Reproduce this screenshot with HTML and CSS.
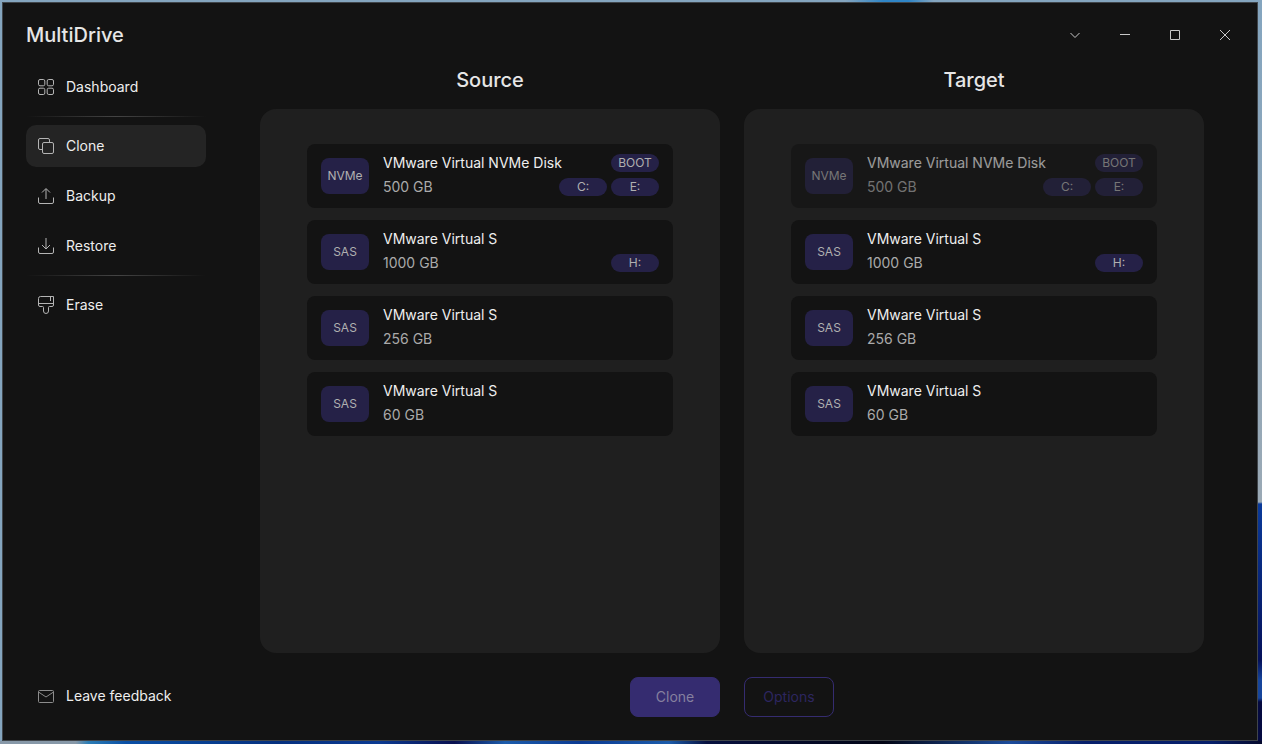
FILE: index.html
```html
<!DOCTYPE html>
<html lang="en">
<head>
    <meta charset="UTF-8">
    <meta name="viewport" content="width=device-width, initial-scale=1.0">
    <title>MultiDrive</title>
    <link rel="stylesheet" href="styles.css">
</head>
<body>
    <div class="window">
        <header class="titlebar">
            <h1>MultiDrive</h1>
            <div class="window-controls">
                <button type="button" aria-label="Menu"><svg viewBox="0 0 12 12"><path d="M1.500 4 6 8.500 10.500 4"/></svg></button>
                <button type="button" aria-label="Minimize"><svg viewBox="0 0 12 12"><path d="M1 5.500H11"/></svg></button>
                <button type="button" aria-label="Maximize"><svg viewBox="0 0 12 12"><path d="M1.500 1.500H10.500V10.500H1.500Z"/></svg></button>
                <button type="button" aria-label="Close"><svg viewBox="0 0 12 12"><path d="M1 1 11 11M11 1 1 11"/></svg></button>
            </div>
        </header>

        <div class="layout">
            <nav class="sidebar">
                <a href="#" class="nav-item">
                    <svg viewBox="0 0 18 18"><rect x="1.500" y="1.500" width="6.300" height="6.300" rx="1.500"/><rect x="10.200" y="1.500" width="6.300" height="6.300" rx="1.500"/><rect x="1.500" y="10.200" width="6.300" height="6.300" rx="1.500"/><rect x="10.200" y="10.200" width="6.300" height="6.300" rx="1.500"/></svg>
                    Dashboard
                </a>
                <hr>
                <a href="#" class="nav-item active">
                    <svg viewBox="0 0 18 18"><rect x="5.500" y="5.500" width="11" height="11" rx="1.500"/><path d="M5.500 12.500H3a1.500 1.500 0 0 1-1.500-1.500V3A1.500 1.500 0 0 1 3 1.500h8A1.500 1.500 0 0 1 12.500 3v2.500"/></svg>
                    Clone
                </a>
                <a href="#" class="nav-item">
                    <svg viewBox="0 0 18 18"><path d="M1.500 10.500V15A1.500 1.500 0 0 0 3 16.500h12a1.500 1.500 0 0 0 1.500-1.500v-4.500M9 12V2M5 5.500l4-4 4 4"/></svg>
                    Backup
                </a>
                <a href="#" class="nav-item">
                    <svg viewBox="0 0 18 18"><path d="M1.500 10.500V15A1.500 1.500 0 0 0 3 16.500h12a1.500 1.500 0 0 0 1.500-1.500v-4.500M9 1v10.500M5 8l4 4 4-4"/></svg>
                    Restore
                </a>
                <hr>
                <a href="#" class="nav-item">
                    <svg viewBox="0 0 18 18"><path d="M3.500.5h13v8.500a1.500 1.500 0 0 1-1.500 1.500h-2.500q-1 0-1 1v3.500a2.500 2.500 0 0 1-5 0v-3.500q0-1-1-1H3a1.500 1.500 0 0 1-1.500-1.500V2.500a2 2 0 0 1 2-2ZM1.500 7.500h15M13.500.5v4.500"/></svg>
                    Erase
                </a>
                <a href="#" class="nav-item feedback">
                    <svg viewBox="0 0 18 18"><rect x="1.500" y="3.500" width="15" height="12" rx="1"/><path d="M1.500 5 9 10l7.500-5"/></svg>
                    Leave feedback
                </a>
            </nav>

            <main class="content">
                <section class="column">
                    <h2>Source</h2>
                    <div class="panel">
                        <button type="button" class="disk">
                            <span class="disk-type">NVMe</span>
                            <span class="disk-info">
                                <span class="disk-line"><span class="disk-name">VMware Virtual NVMe Disk</span><span class="tag">BOOT</span></span>
                                <span class="disk-line"><span class="disk-size">500 GB</span><span class="tag">C:</span><span class="tag">E:</span></span>
                            </span>
                        </button>
                        <button type="button" class="disk">
                            <span class="disk-type">SAS</span>
                            <span class="disk-info">
                                <span class="disk-line"><span class="disk-name">VMware Virtual S</span></span>
                                <span class="disk-line"><span class="disk-size">1000 GB</span><span class="tag">H:</span></span>
                            </span>
                        </button>
                        <button type="button" class="disk">
                            <span class="disk-type">SAS</span>
                            <span class="disk-info">
                                <span class="disk-line"><span class="disk-name">VMware Virtual S</span></span>
                                <span class="disk-line"><span class="disk-size">256 GB</span></span>
                            </span>
                        </button>
                        <button type="button" class="disk">
                            <span class="disk-type">SAS</span>
                            <span class="disk-info">
                                <span class="disk-line"><span class="disk-name">VMware Virtual S</span></span>
                                <span class="disk-line"><span class="disk-size">60 GB</span></span>
                            </span>
                        </button>
                    </div>
                    <div class="actions actions-right">
                        <button type="button" class="btn btn-primary" disabled>Clone</button>
                    </div>
                </section>

                <section class="column">
                    <h2>Target</h2>
                    <div class="panel">
                        <button type="button" class="disk" disabled>
                            <span class="disk-type">NVMe</span>
                            <span class="disk-info">
                                <span class="disk-line"><span class="disk-name">VMware Virtual NVMe Disk</span><span class="tag">BOOT</span></span>
                                <span class="disk-line"><span class="disk-size">500 GB</span><span class="tag">C:</span><span class="tag">E:</span></span>
                            </span>
                        </button>
                        <button type="button" class="disk">
                            <span class="disk-type">SAS</span>
                            <span class="disk-info">
                                <span class="disk-line"><span class="disk-name">VMware Virtual S</span></span>
                                <span class="disk-line"><span class="disk-size">1000 GB</span><span class="tag">H:</span></span>
                            </span>
                        </button>
                        <button type="button" class="disk">
                            <span class="disk-type">SAS</span>
                            <span class="disk-info">
                                <span class="disk-line"><span class="disk-name">VMware Virtual S</span></span>
                                <span class="disk-line"><span class="disk-size">256 GB</span></span>
                            </span>
                        </button>
                        <button type="button" class="disk">
                            <span class="disk-type">SAS</span>
                            <span class="disk-info">
                                <span class="disk-line"><span class="disk-name">VMware Virtual S</span></span>
                                <span class="disk-line"><span class="disk-size">60 GB</span></span>
                            </span>
                        </button>
                    </div>
                    <div class="actions">
                        <button type="button" class="btn btn-outline" disabled>Options</button>
                    </div>
                </section>
            </main>
        </div>
    </div>
</body>
</html>
```
FILE: styles.css
```css
* {
    box-sizing: border-box;
}
/* desktop wallpaper showing around the window */
body {
    margin: 0;
    padding: 2px 4px 3px 2px;
    min-height: 100vh;
    display: flex;
    font-family: Inter, sans-serif;
    font-size: 14px;
    line-height: 20px;
    color: #e6e6e6;
    background-color: #84a5bf;
    background-image:
        linear-gradient(90deg, #8798a8 0, #8798a8 6%, #2c7db5 7%, #0a4fa5 10%, #05307f 22%, #0b3a92 30%, #0a1050 36%, #1c5cab 40%, #0b3a92 46%, #1c5cab 53%, #07103f 56%, #020515 70%, #1c4c9b 80%, #071f6b 86%, #071f6b 96%, #050a2c 100%),
        linear-gradient(180deg, #84a5bf 0, #9aa9b5 502px, #0a3a9a 504px, #05115a 660px, #16459c 680px, #16459c 698px, #050a40 702px),
        linear-gradient(90deg, transparent 67%, #2f86c8 70%, #2f86c8 72%, transparent 74%);
    background-position: bottom, right, top;
    background-size: 100% 3px, 4px 100%, 100% 2px;
    background-repeat: no-repeat;
}
.window {
    flex: 1;
    display: flex;
    flex-direction: column;
    background-color: #131313;
    border: 1px solid rgba(110, 120, 130, 0.5);
}
.titlebar {
    display: flex;
    justify-content: space-between;
    align-items: center;
    height: 63px;
    padding: 0 7px 0 23px;
}
h1,
h2 {
    margin: 0;
    font-size: 20px;
    font-weight: 500;
    line-height: 28px;
}
.window-controls {
    display: flex;
}
.window-controls button {
    display: flex;
    justify-content: center;
    align-items: center;
    width: 50px;
    height: 33px;
    padding: 0;
    border: none;
    background: none;
}
.window-controls svg {
    width: 12px;
    height: 12px;
    fill: none;
    stroke: #c8c8c8;
}
.layout {
    flex: 1;
    display: flex;
    gap: 54px;
    padding: 0 53px 23px 23px;
}
.sidebar {
    display: flex;
    flex-direction: column;
    gap: 8px;
    width: 180px;
}
.nav-item {
    display: flex;
    align-items: center;
    gap: 11px;
    height: 42px;
    padding: 0 11px;
    border-radius: 10px;
    color: #eee;
    text-decoration: none;
}
.nav-item svg {
    width: 18px;
    height: 18px;
    fill: none;
    stroke: #b4b4b4;
}
.nav-item.active {
    background-color: #242424;
}
.sidebar hr {
    width: 100%;
    height: 1px;
    margin: 0;
    border: none;
    background: linear-gradient(90deg, transparent, #444, transparent);
}
.sidebar .feedback {
    margin-top: auto;
}
.feedback svg {
    stroke: #8c8c8c;
}
.content {
    flex: 1;
    display: flex;
    gap: 24px;
}
.column {
    flex: 1;
    display: flex;
    flex-direction: column;
}
.column h2 {
    height: 43px;
    text-align: center;
}
.panel {
    flex: 1;
    display: flex;
    flex-direction: column;
    gap: 12px;
    padding: 35px 47px;
    border-radius: 16px;
    background-color: #1f1f1f;
}
.disk {
    display: flex;
    align-items: center;
    gap: 14px;
    height: 64px;
    padding: 0 14px;
    border: none;
    border-radius: 8px;
    background-color: #131313;
    color: #eee;
    font: inherit;
    text-align: left;
}
.disk:disabled {
    opacity: 0.6;
}
.disk-type {
    width: 48px;
    border-radius: 8px;
    background-color: #252147;
    color: #b0b0b0;
    font-size: 12px;
    line-height: 36px;
    text-align: center;
}
.disk-info {
    flex: 1;
    display: flex;
    flex-direction: column;
    gap: 6px;
    padding-bottom: 2px;
    line-height: 18px;
    white-space: nowrap;
}
.disk-line {
    display: flex;
    gap: 4px;
}
.disk-name,
.disk-size {
    flex: 1;
}
.disk-size {
    color: #aaa;
}
.tag {
    width: 48px;
    border-radius: 9px;
    background-color: #252147;
    color: #b0b0b0;
    font-size: 12px;
    text-align: center;
}
.actions {
    display: flex;
    padding-top: 24px;
}
.actions-right {
    justify-content: flex-end;
}
.btn {
    width: 90px;
    height: 40px;
    padding: 0;
    border: 1px solid #352c70;
    border-radius: 8px;
    font: inherit;
}
.btn-primary {
    background-color: #352c70;
    color: #85809f;
}
.btn-outline {
    background: none;
    color: #2d2660;
}
```
